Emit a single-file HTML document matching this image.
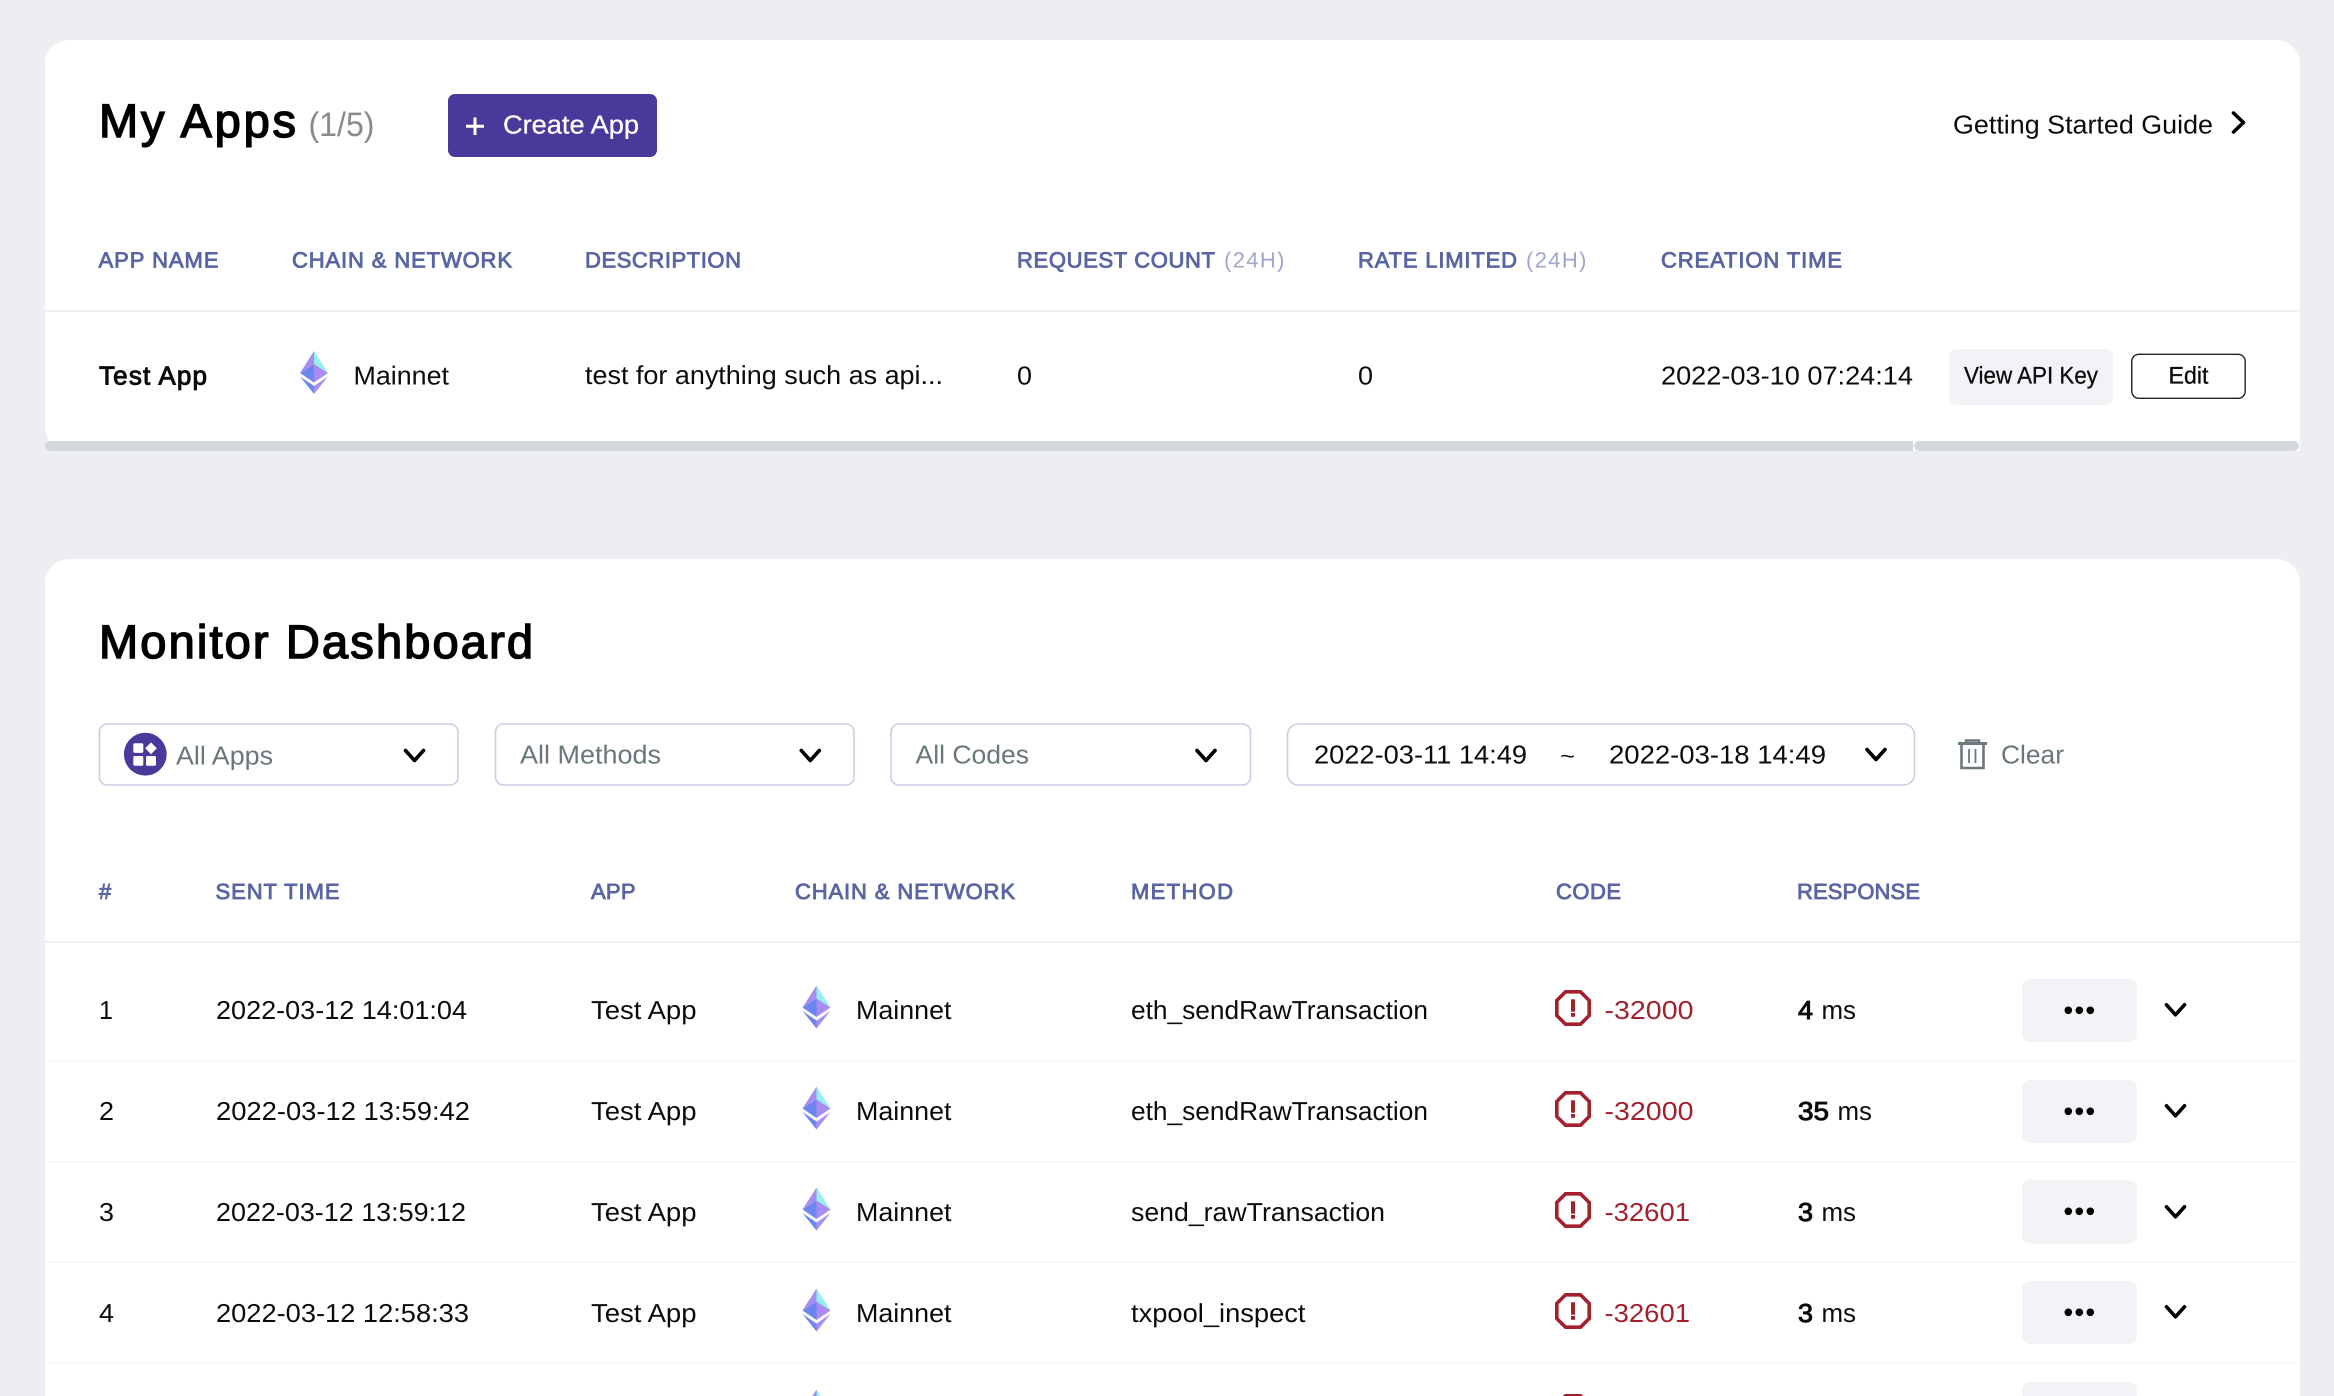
<!DOCTYPE html>
<html lang="en">
<head>
<meta charset="utf-8">
<title>My Apps - Monitor Dashboard</title>
<style>
html,body{margin:0;padding:0;width:2334px;height:1396px;overflow:hidden;background:#edeef2}
svg{display:block;font-family:"Liberation Sans",Arial,sans-serif;text-rendering:geometricPrecision}
.b{font-size:26px;fill:#0b0b0b}
.bb{font-size:26px;fill:#0b0b0b;stroke:#0b0b0b;stroke-width:.95px}
.h{font-size:22px;fill:#5a65a3;stroke:#5a65a3;stroke-width:.85px}
.l{font-size:22px;fill:#a0a6cc}
.t{font-size:47px;fill:#000;stroke:#000;stroke-width:1.5px}
.g{font-size:26px;fill:#69767a}
.c{font-size:26px;fill:#a3212f}
.s{font-size:24px;fill:#0b0b0b;stroke:#0b0b0b;stroke-width:.3px}
.ch{fill:none;stroke:#000;stroke-width:3.6;stroke-linecap:round;stroke-linejoin:round}
.box{fill:#fff;stroke:#cfcbe6;stroke-width:1.6}
.btn{fill:#f2f3f7}
.d{fill:#f8f8f8}
</style>
</head>
<body>
<svg width="2334" height="1396" viewBox="0 0 2334 1396" xmlns="http://www.w3.org/2000/svg">
<defs>
<g id="eth">
<path d="M0 0L-14 22L0 13Z" fill="#a78df0"/>
<path d="M0 0L14 22L0 13Z" fill="#94f0ea"/>
<path d="M-14 22L0 13L0 31.5Z" fill="#6b86ee"/>
<path d="M14 22L0 13L0 31.5Z" fill="#a98bf1"/>
<path d="M-14 25.5L0 35L0 43Z" fill="#6b86ee"/>
<path d="M14 25.5L0 35L0 43Z" fill="#ab90f3"/>
</g>
<g id="err">
<path d="M-7.5 -16.2H7.5L16.2 -7.5V7.5L7.5 16.2H-7.5L-16.2 7.5V-7.5Z" fill="none" stroke="#a3212f" stroke-width="3.6"/>
<rect x="-2" y="-8.7" width="4" height="12.4" fill="#a3212f"/>
<rect x="-2" y="5" width="4" height="3.8" fill="#a3212f"/>
</g>
<g id="more">
<circle cx="-11" cy="0" r="3.8" fill="#000"/><circle cx="0" cy="0" r="3.8" fill="#000"/><circle cx="11" cy="0" r="3.8" fill="#000"/>
</g>
<path id="dn" class="ch" d="M-9 -5L0 5L9 -5"/>
</defs>

<!-- My Apps card -->
<rect x="45" y="40" width="2255" height="411" rx="24" fill="#fff"/>
<rect x="2270" y="420" width="30" height="31" fill="#fff"/>
<rect x="45" y="441" width="1868" height="10" rx="5" fill="#d4d7dc"/>
<rect x="60" y="441" width="1853" height="10" fill="#d4d7dc"/>
<rect x="1914" y="441" width="385" height="10" rx="5" fill="#d4d7dc"/>

<text class="t" x="99" y="137" textLength="197" lengthAdjust="spacing">My Apps</text>
<text x="308.5" y="136" font-size="34" fill="#8a8a8a" textLength="66" lengthAdjust="spacingAndGlyphs">(1/5)</text>

<rect x="448" y="94" width="209" height="63" rx="7" fill="#4b389b"/>
<path d="M475 117.5V135M466 126.2H484" stroke="#fff" stroke-width="3" fill="none"/>
<text x="503" y="133.5" font-size="26" fill="#fff" stroke="#fff" stroke-width=".3" textLength="136" lengthAdjust="spacingAndGlyphs">Create App</text>

<text class="b" x="1953" y="133.5" textLength="260" lengthAdjust="spacingAndGlyphs">Getting Started Guide</text>
<path class="ch" d="M2233.5 113L2243.5 122.5L2233.5 132"/>

<text class="h" x="98.5" y="267.7" textLength="120" lengthAdjust="spacing">APP NAME</text>
<text class="h" x="292" y="267.7" textLength="220" lengthAdjust="spacing">CHAIN &amp; NETWORK</text>
<text class="h" x="585" y="267.7" textLength="156" lengthAdjust="spacing">DESCRIPTION</text>
<text class="h" x="1017" y="267.7" textLength="198" lengthAdjust="spacing">REQUEST COUNT</text>
<text class="l" x="1224" y="267.7" textLength="60.5" lengthAdjust="spacing">(24H)</text>
<text class="h" x="1358" y="267.7" textLength="159" lengthAdjust="spacing">RATE LIMITED</text>
<text class="l" x="1526" y="267.7" textLength="60.5" lengthAdjust="spacing">(24H)</text>
<text class="h" x="1661" y="267.7" textLength="181" lengthAdjust="spacing">CREATION TIME</text>
<rect x="45" y="310" width="2255" height="2" fill="#f0f0f0"/>

<text class="bb" x="99" y="384.3" textLength="108" lengthAdjust="spacing">Test App</text>
<use href="#eth" x="314" y="351"/>
<text class="b" x="353.5" y="384.3" textLength="95.5" lengthAdjust="spacingAndGlyphs">Mainnet</text>
<text class="b" x="585" y="384" textLength="358" lengthAdjust="spacingAndGlyphs">test for anything such as api...</text>
<text class="b" x="1017" y="384.3" textLength="15" lengthAdjust="spacingAndGlyphs">0</text>
<text class="b" x="1358" y="384.3" textLength="15" lengthAdjust="spacingAndGlyphs">0</text>
<text class="b" x="1661" y="384.3" textLength="252" lengthAdjust="spacingAndGlyphs">2022-03-10 07:24:14</text>
<rect class="btn" x="1949" y="349" width="164" height="56" rx="8"/>
<text class="s" x="1964" y="383.5" textLength="134" lengthAdjust="spacingAndGlyphs">View API Key</text>
<rect x="2131.8" y="354.3" width="113.4" height="44" rx="7" fill="#fff" stroke="#222" stroke-width="1.4"/>
<text class="s" x="2168.5" y="383.5" textLength="40" lengthAdjust="spacingAndGlyphs">Edit</text>

<!-- Monitor Dashboard card -->
<rect x="45" y="559" width="2255" height="900" rx="24" fill="#fff"/>
<text class="t" x="99" y="658" textLength="434" lengthAdjust="spacing">Monitor Dashboard</text>

<rect class="box" x="99.5" y="724" width="358.5" height="61" rx="8"/>
<circle cx="145.3" cy="754.2" r="21.4" fill="#4b389b"/>
<rect x="133.3" y="743.3" width="10" height="9.6" rx="1.5" fill="#fff"/>
<rect x="133.3" y="756" width="10" height="9.7" rx="1.5" fill="#fff"/>
<rect x="146" y="756" width="10" height="9.7" rx="1.5" fill="#fff"/>
<path d="M151 742.4L156.8 748.3L151 754.2L145.2 748.3Z" fill="#fff"/>
<text class="g" x="176" y="764.5" textLength="97" lengthAdjust="spacingAndGlyphs">All Apps</text>
<use href="#dn" x="414.5" y="755.5"/>

<rect class="box" x="495.5" y="724" width="358.5" height="61" rx="8"/>
<text class="g" x="520" y="763.5" textLength="141" lengthAdjust="spacingAndGlyphs">All Methods</text>
<use href="#dn" x="810.3" y="755.5"/>

<rect class="box" x="891" y="724" width="359.5" height="61" rx="8"/>
<text class="g" x="915.5" y="763.5" textLength="113.5" lengthAdjust="spacingAndGlyphs">All Codes</text>
<use href="#dn" x="1206" y="755.5"/>

<rect class="box" x="1287.5" y="724" width="627" height="61" rx="11"/>
<text class="b" x="1314" y="763.5" textLength="213" lengthAdjust="spacingAndGlyphs">2022-03-11 14:49</text>
<text class="b" x="1560" y="763.5" style="font-size:22px" textLength="15" lengthAdjust="spacingAndGlyphs">~</text>
<text class="b" x="1609" y="763.5" textLength="217" lengthAdjust="spacingAndGlyphs">2022-03-18 14:49</text>
<use href="#dn" x="1876" y="754.5"/>

<g fill="none" stroke="#6b787d">
<path d="M1958 743.5H1987" stroke-width="3"/>
<path d="M1966 743V740.5H1979V743" stroke-width="2.4"/>
<path d="M1961.5 744V768H1983.5V744" stroke-width="2.6"/>
<path d="M1969 749V763M1975.5 749V763" stroke-width="1.8"/>
</g>
<text class="g" x="2001" y="763.5" textLength="63" lengthAdjust="spacingAndGlyphs">Clear</text>

<text class="h" x="99" y="899" textLength="12" lengthAdjust="spacing">#</text>
<text class="h" x="215.5" y="899" textLength="124" lengthAdjust="spacing">SENT TIME</text>
<text class="h" x="591" y="899" textLength="44.5" lengthAdjust="spacing">APP</text>
<text class="h" x="795" y="899" textLength="220" lengthAdjust="spacing">CHAIN &amp; NETWORK</text>
<text class="h" x="1131" y="899" textLength="102" lengthAdjust="spacing">METHOD</text>
<text class="h" x="1556" y="899" textLength="65" lengthAdjust="spacing">CODE</text>
<text class="h" x="1797" y="899" textLength="123" lengthAdjust="spacing">RESPONSE</text>
<rect x="45" y="941" width="2255" height="2" fill="#f0f0f0"/>

<!-- Row 1 -->
<text class="b" x="99" y="1019" textLength="14" lengthAdjust="spacingAndGlyphs">1</text>
<text class="b" x="216" y="1019" textLength="251" lengthAdjust="spacingAndGlyphs">2022-03-12 14:01:04</text>
<text class="b" x="591" y="1019" textLength="105.5" lengthAdjust="spacingAndGlyphs">Test App</text>
<use href="#eth" x="816.5" y="985.5"/>
<text class="b" x="856" y="1019" textLength="95.5" lengthAdjust="spacingAndGlyphs">Mainnet</text>
<text class="b" x="1131" y="1019" textLength="297" lengthAdjust="spacingAndGlyphs">eth_sendRawTransaction</text>
<use href="#err" x="1573" y="1008"/>
<text class="c" x="1604.5" y="1019" textLength="89" lengthAdjust="spacingAndGlyphs">-32000</text>
<text class="bb" x="1798" y="1019" textLength="15" lengthAdjust="spacingAndGlyphs">4</text>
<text class="b" x="1821.5" y="1019" textLength="34.5" lengthAdjust="spacingAndGlyphs">ms</text>
<rect class="btn" x="2022" y="979" width="115" height="63" rx="8"/>
<use href="#more" x="2079.3" y="1010.3"/>
<use href="#dn" x="2175.5" y="1009.8"/>
<rect class="d" x="45" y="1060" width="2255" height="2"/>

<!-- Row 2 -->
<text class="b" x="99" y="1120" textLength="15" lengthAdjust="spacingAndGlyphs">2</text>
<text class="b" x="216" y="1120" textLength="254" lengthAdjust="spacingAndGlyphs">2022-03-12 13:59:42</text>
<text class="b" x="591" y="1120" textLength="105.5" lengthAdjust="spacingAndGlyphs">Test App</text>
<use href="#eth" x="816.5" y="1086.5"/>
<text class="b" x="856" y="1120" textLength="95.5" lengthAdjust="spacingAndGlyphs">Mainnet</text>
<text class="b" x="1131" y="1120" textLength="297" lengthAdjust="spacingAndGlyphs">eth_sendRawTransaction</text>
<use href="#err" x="1573" y="1109"/>
<text class="c" x="1604.5" y="1120" textLength="89" lengthAdjust="spacingAndGlyphs">-32000</text>
<text class="bb" x="1798" y="1120" textLength="31" lengthAdjust="spacingAndGlyphs">35</text>
<text class="b" x="1837.5" y="1120" textLength="34.5" lengthAdjust="spacingAndGlyphs">ms</text>
<rect class="btn" x="2022" y="1080" width="115" height="63" rx="8"/>
<use href="#more" x="2079.3" y="1111.3"/>
<use href="#dn" x="2175.5" y="1110.8"/>
<rect class="d" x="45" y="1161" width="2255" height="2"/>

<!-- Row 3 -->
<text class="b" x="99" y="1221" textLength="15" lengthAdjust="spacingAndGlyphs">3</text>
<text class="b" x="216" y="1221" textLength="250" lengthAdjust="spacingAndGlyphs">2022-03-12 13:59:12</text>
<text class="b" x="591" y="1221" textLength="105.5" lengthAdjust="spacingAndGlyphs">Test App</text>
<use href="#eth" x="816.5" y="1187.5"/>
<text class="b" x="856" y="1221" textLength="95.5" lengthAdjust="spacingAndGlyphs">Mainnet</text>
<text class="b" x="1131" y="1221" textLength="254" lengthAdjust="spacingAndGlyphs">send_rawTransaction</text>
<use href="#err" x="1573" y="1210"/>
<text class="c" x="1604.5" y="1221" textLength="85.5" lengthAdjust="spacingAndGlyphs">-32601</text>
<text class="bb" x="1798" y="1221" textLength="15" lengthAdjust="spacingAndGlyphs">3</text>
<text class="b" x="1821.5" y="1221" textLength="34.5" lengthAdjust="spacingAndGlyphs">ms</text>
<rect class="btn" x="2022" y="1180" width="115" height="63.5" rx="8"/>
<use href="#more" x="2079.3" y="1211.3"/>
<use href="#dn" x="2175.5" y="1211.8"/>
<rect class="d" x="45" y="1261" width="2255" height="2"/>

<!-- Row 4 -->
<text class="b" x="99" y="1322" textLength="15" lengthAdjust="spacingAndGlyphs">4</text>
<text class="b" x="216" y="1322" textLength="253" lengthAdjust="spacingAndGlyphs">2022-03-12 12:58:33</text>
<text class="b" x="591" y="1322" textLength="105.5" lengthAdjust="spacingAndGlyphs">Test App</text>
<use href="#eth" x="816.5" y="1288.5"/>
<text class="b" x="856" y="1322" textLength="95.5" lengthAdjust="spacingAndGlyphs">Mainnet</text>
<text class="b" x="1131" y="1322" textLength="174.5" lengthAdjust="spacingAndGlyphs">txpool_inspect</text>
<use href="#err" x="1573" y="1311"/>
<text class="c" x="1604.5" y="1322" textLength="85.5" lengthAdjust="spacingAndGlyphs">-32601</text>
<text class="bb" x="1798" y="1322" textLength="15" lengthAdjust="spacingAndGlyphs">3</text>
<text class="b" x="1821.5" y="1322" textLength="34.5" lengthAdjust="spacingAndGlyphs">ms</text>
<rect class="btn" x="2022" y="1281" width="115" height="63" rx="8"/>
<use href="#more" x="2079.3" y="1312.3"/>
<use href="#dn" x="2175.5" y="1311.8"/>
<rect class="d" x="45" y="1362" width="2255" height="2"/>

<!-- Row 5 (cut off) -->
<use href="#eth" x="816.5" y="1389.5"/>
<use href="#err" x="1573" y="1412"/>
<rect class="btn" x="2022" y="1382" width="115" height="63" rx="8"/>
</svg>
</body>
</html>
